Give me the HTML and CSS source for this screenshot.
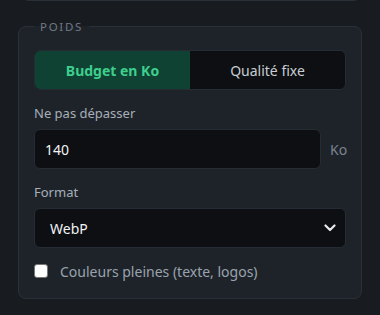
FILE: index.html
```html
<!DOCTYPE html>
<html lang="fr">
<head>
<meta charset="utf-8">
<link rel="stylesheet" href="styles.css">
</head>
<body>
<div class="prev-card"></div>
<fieldset class="group">
  <legend class="group-title">POIDS</legend>
  <div class="segmented">
    <button class="seg seg-active">Budget en Ko</button>
    <button class="seg">Qualité fixe</button>
  </div>
  <label class="field-label">Ne pas dépasser</label>
  <div class="input-row">
    <div class="text-input">140</div>
    <span class="unit">Ko</span>
  </div>
  <label class="field-label">Format</label>
  <div class="select">
    <span>WebP</span>
    <svg class="chev" width="12" height="8" viewBox="0 0 12 8"><path d="M1.5 1.5 L6 6 L10.5 1.5" fill="none" stroke="#e8eaed" stroke-width="2.2" stroke-linecap="round" stroke-linejoin="round"/></svg>
  </div>
  <div class="check-row">
    <span class="checkbox"></span>
    <span class="check-label">Couleurs pleines (texte, logos)</span>
  </div>
</fieldset>
</body>
</html>
```
FILE: styles.css
```css
html, body {
  margin: 0;
  padding: 0;
  background: #181c21;
  width: 380px;
  height: 315px;
  overflow: hidden;
  font-family: "Noto Sans", "Open Sans", sans-serif;
}
.prev-card {
  margin: -20px 0 0 21px;
  width: 338px;
  height: 20px;
  border: 1px solid #2a3038;
  border-top: none;
  border-radius: 0 0 8px 8px;
  background: #1e232a;
}
.group {
  margin: 18px 0 0 18px;
  width: 344px;
  box-sizing: border-box;
  border: 1px solid #2a3038;
  border-radius: 8px;
  background: #1e232a;
  padding: 16px 15px 18px 15px;
  min-inline-size: 0;
}
.group-title {
  padding: 0 6px;
  font-size: 11.5px;
  letter-spacing: 1.7px;
  color: #6f7884;
  line-height: 15px;
}
.segmented {
  display: flex;
  height: 40px;
  box-sizing: border-box;
  border: 1px solid #262c33;
  border-radius: 6px;
  overflow: hidden;
  background: #0d0f12;
}
.seg {
  flex: 1;
  border: none;
  background: transparent;
  font-family: inherit;
  font-size: 14px;
  color: #c9cdd3;
  padding: 0;
}
.seg-active {
  background: #0f4233;
  color: #3ecf8e;
  font-weight: 700;
}
.field-label {
  display: block;
  margin-top: 14px;
  margin-bottom: 7px;
  font-size: 13px;
  line-height: 18px;
  color: #a7afb9;
}
.input-row {
  display: flex;
  align-items: center;
  gap: 9px;
}
.text-input {
  flex: 1;
  height: 40px;
  box-sizing: border-box;
  border: 1px solid #262c33;
  border-radius: 6px;
  background: #0d0f12;
  color: #f1f3f5;
  font-size: 14px;
  display: flex;
  align-items: center;
  padding-left: 10px;
}
.unit {
  font-size: 14px;
  color: #7b848f;
  width: 16px;
}
.select {
  height: 40px;
  box-sizing: border-box;
  border: 1px solid #262c33;
  border-radius: 6px;
  background: #0d0f12;
  color: #f1f3f5;
  font-size: 14px;
  display: flex;
  align-items: center;
  justify-content: space-between;
  padding: 0 9px 0 15px;
}
.check-row {
  display: flex;
  align-items: center;
  gap: 12px;
  margin-top: 14px;
  height: 18px;
}
.checkbox {
  width: 14px;
  height: 14px;
  box-sizing: border-box;
  background: #ffffff;
  border: 1px solid #767676;
  border-radius: 3px;
}
.check-label {
  font-size: 14px;
  color: #9aa3ad;
}
```
